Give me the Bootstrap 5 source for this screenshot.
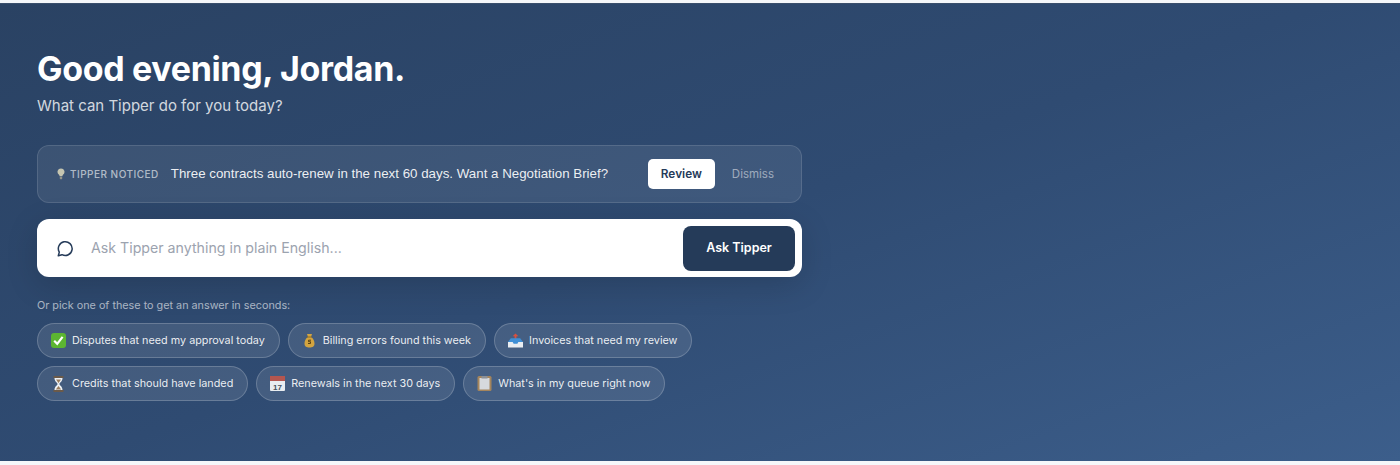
<!DOCTYPE html>
<html lang="en"><head><meta charset="utf-8"><title>Tipper</title>
<link href="https://cdn.jsdelivr.net/npm/bootstrap@5.3.0/dist/css/bootstrap.min.css" rel="stylesheet">
<style>
html,body{height:465px;overflow:hidden}
body{background:#f5f7fa;font-family:Inter,"Liberation Sans",sans-serif;padding-top:3px}
.hero-wrap{height:458px;padding:47px 37px 0;background:linear-gradient(160deg,#2a4263 0%,#2f4b72 50%,#3c5e8b 100%);color:#fff;border-top:1px solid #3a4f6c}
.hero-inner{width:765px}
.hero-title{font-size:34px;font-weight:700;letter-spacing:-.34px;line-height:36px;margin:0 0 9px;white-space:nowrap}
.hero-sub{font-size:15px;line-height:20px;color:rgba(255,255,255,.8);margin:0 0 29px}
.notice{height:58px;padding:0 27px 0 19px;background:rgba(255,255,255,.08);border:1px solid rgba(255,255,255,.12);border-radius:12px}
.bulb-icon{margin-right:5px;opacity:.8}
.notice-tag{font-size:10px;font-weight:500;letter-spacing:.48px;color:rgba(255,255,255,.62);white-space:nowrap}
.notice-text{font-family:"Liberation Sans",sans-serif;font-size:13.33px;color:rgba(255,255,255,.92);margin-left:12px}
.review-btn{--bs-btn-padding-x:13px;--bs-btn-padding-y:0;height:30px;font-size:11.8px;font-weight:600;color:#253b59;background:#fff;border:0;border-radius:5px;line-height:30px}
.review-btn:hover{color:#253b59;background:#fff}
.dismiss-btn{font-size:11.5px;color:rgba(255,255,255,.5);margin-left:17px;padding-top:1px}
.ask-box{height:58px;margin-top:16px;padding:0 7px 0 20px;background:#fff;border-radius:12px;box-shadow:0 8px 32px rgba(0,0,0,.15)}
.ask-input{border:0;outline:0;padding:0;font-size:14.2px;color:#253b59;margin-left:17px;background:transparent;min-width:0}
.ask-input::placeholder{color:#9ca3af;opacity:1}
.ask-btn{width:112px;height:45px;background:#253b59;color:#fff;font-size:12.5px;font-weight:600;border:0;border-radius:8px}
.ask-btn:hover{background:#253b59;color:#fff}
.pick-label{font-size:10.8px;line-height:14px;color:rgba(255,255,255,.6);margin:22px 0 10px}
.chip-row{gap:8px}
.chip-pill{height:35px;padding:1px 14px 0 13px;font-size:10.8px;color:rgba(255,255,255,.9);background:rgba(255,255,255,.1);border:1px solid rgba(255,255,255,.2);border-radius:18px;gap:6px;white-space:nowrap}
.chip-pill:hover{color:#fff;background:rgba(255,255,255,.1);border-color:rgba(255,255,255,.2)}
.chip-pill svg{flex:none;margin-bottom:1px}
</style></head><body>
<main class="hero-wrap">
<div class="hero-inner">
<h1 class="hero-title">Good evening, Jordan.</h1>
<p class="hero-sub">What can Tipper do for you today?</p>
<div class="notice d-flex align-items-center">
<svg width="8" height="12" viewBox="0 0 8 12" class="bulb-icon"><path d="M4 .5a3.4 3.4 0 0 0-2 6.2c.4.4.6 1 .6 1.6h2.8c0-.6.2-1.200.6-1.600A3.400 3.400 0 0 0 4 .5z" fill="#e8e2c0"/><rect x="2.800" y="8.800" width="2.400" height="2.400" rx=".6" fill="#a9a48d"/></svg>
<span class="notice-tag">TIPPER NOTICED</span>
<span class="notice-text flex-grow-1">Three contracts auto-renew in the next 60 days. Want a Negotiation Brief?</span>
<button class="btn review-btn" type="button">Review</button>
<span class="dismiss-btn">Dismiss</span>
</div>
<div class="ask-box d-flex align-items-center">
<svg width="17" height="17" viewBox="0 0 17 17" fill="none" stroke="#253b59" stroke-width="1.500" stroke-linejoin="round"><path d="M1.300 15.700l1-3.600A6.900 6.900 0 1 1 5 14.700z"/></svg>
<input class="ask-input flex-grow-1" type="text" placeholder="Ask Tipper anything in plain English...">
<button class="btn ask-btn" type="button">Ask Tipper</button>
</div>
<p class="pick-label">Or pick one of these to get an answer in seconds:</p>
<div class="d-flex chip-row mb-2">
<button class="btn chip-pill d-inline-flex align-items-center" type="button"><svg width="15" height="15" viewBox="0 0 15 15"><rect width="15" height="15" rx="3" fill="#5cb531"/><path d="M3.200 7.800l3 3 5.400-7" fill="none" stroke="#fff" stroke-width="2.200"/></svg>Disputes that need my approval today</button>
<button class="btn chip-pill d-inline-flex align-items-center" type="button"><svg width="15" height="15" viewBox="0 0 15 15"><path d="M5 1h5l-1 3c2.500 1.500 3.500 4 3.500 6.500 0 3-2 4-5 4s-5-1-5-4C2.500 8 3.500 5.500 6 4z" fill="#d3a43f"/><rect x="5" y="3.500" width="5" height="1" fill="#8a6a24"/><path d="M9 7.200H6.500v1.500H8.500v1.800H6" fill="none" stroke="#5a4314" stroke-width="1"/></svg>Billing errors found this week</button>
<button class="btn chip-pill d-inline-flex align-items-center" type="button"><svg width="15" height="15" viewBox="0 0 16 15"><path d="M8 0l3 3H9v3H7V3H5z" fill="#d8503f"/><path d="M3 5h10l3 4v5H0V9z" fill="#3f8fd6"/><path d="M0 9h5l1 2h4l1-2h5v6H0z" fill="#e9edf2"/></svg>Invoices that need my review</button>
</div>
<div class="d-flex chip-row">
<button class="btn chip-pill d-inline-flex align-items-center" type="button"><svg width="15" height="16" viewBox="0 0 15 16"><rect x="2.500" width="10" height="2.200" rx=".5" fill="#6b5a4a"/><rect x="2.500" y="13.800" width="10" height="2.200" rx=".5" fill="#6b5a4a"/><path d="M3.500 2h8c0 3.300-2.500 4.400-3.200 6 .7 1.600 3.200 2.700 3.200 6h-8c0-3.300 2.500-4.400 3.200-6C6 6.400 3.500 5.300 3.500 2z" fill="#eef1f4"/><path d="M5 3.500h5L7.500 7zM4.800 13.500l2.700-3.500 2.700 3.500z" fill="#9b7e5e"/></svg>Credits that should have landed</button>
<button class="btn chip-pill d-inline-flex align-items-center" type="button"><svg width="15" height="15" viewBox="0 0 15 15"><rect width="15" height="15" rx="1" fill="#e9edf0"/><rect width="15" height="5" fill="#b4564f"/><text x="7.500" y="13.500" font-size="8" font-weight="700" text-anchor="middle" fill="#46505c" font-family="Liberation Sans">17</text></svg>Renewals in the next 30 days</button>
<button class="btn chip-pill d-inline-flex align-items-center" type="button"><svg width="15" height="15" viewBox="0 0 14 15"><rect width="14" height="15" rx="1.500" fill="#a5855c"/><rect x="2" y="2" width="10" height="11.500" fill="#d6d9dd"/><rect x="4" y="0" width="6" height="2.500" fill="#8b9097"/></svg>What's in my queue right now</button>
</div>
</div>
</main>
<script src="https://cdn.jsdelivr.net/npm/bootstrap@5.3.0/dist/js/bootstrap.bundle.min.js"></script>
</body></html>
